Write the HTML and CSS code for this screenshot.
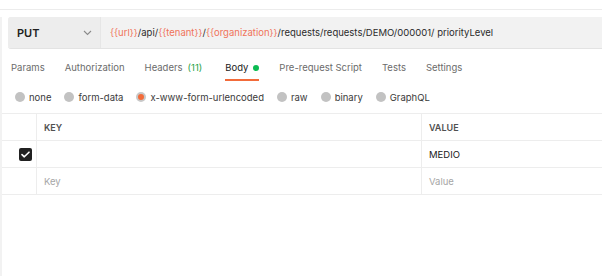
FILE: index.html
```html
<!DOCTYPE html>
<html lang="en">
<head>
  <meta charset="UTF-8">
  <meta name="viewport" content="width=device-width, initial-scale=1.0">
  <title>PUT priorityLevel</title>
  <link rel="stylesheet" href="styles.css">
</head>
<body>
  <div class="topbar"></div>
  <div class="main">
    <div class="request">
      <div class="method">
        <span>PUT</span>
        <svg class="chevron" width="9" height="6" viewBox="0 0 9 6"><path d="M1 1l3.5 3.5L8 1" fill="none" stroke="#8a8a8a" stroke-width="1.1"/></svg>
      </div>
      <div class="url"><span class="var">{{url}}</span>/api/<span class="var">{{tenant}}</span>/<span class="var">{{organization}}</span>/requests/requests/DEMO/000001/ priorityLevel</div>
    </div>

    <div class="tabs">
      <div class="tab">Params</div>
      <div class="tab">Authorization</div>
      <div class="tab">Headers <span class="count">(11)</span></div>
      <div class="tab active">Body <span class="dot"></span></div>
      <div class="tab">Pre-request Script</div>
      <div class="tab">Tests</div>
      <div class="tab">Settings</div>
    </div>

    <div class="modes">
      <label class="mode"><span class="radio"></span>none</label>
      <label class="mode"><span class="radio"></span>form-data</label>
      <label class="mode"><span class="radio on"></span>x-www-form-urlencoded</label>
      <label class="mode"><span class="radio"></span>raw</label>
      <label class="mode"><span class="radio"></span>binary</label>
      <label class="mode"><span class="radio"></span>GraphQL</label>
    </div>

    <div class="table">
      <div class="cell"></div>
      <div class="cell head">KEY</div>
      <div class="cell head">VALUE</div>

      <div class="cell check">
        <span class="box"><svg width="9" height="7" viewBox="0 0 9 7"><path d="M1 3.6l2.3 2.2L8 1.2" fill="none" stroke="#fff" stroke-width="1.6" stroke-linecap="round" stroke-linejoin="round"/></svg></span>
      </div>
      <div class="cell"></div>
      <div class="cell">MEDIO</div>

      <div class="cell"></div>
      <div class="cell placeholder">Key</div>
      <div class="cell placeholder">Value</div>
    </div>
  </div>
</body>
</html>
```

FILE: styles.css
```css
body {
  margin: 0;
  background: #fff;
  font-family: Inter, 'Noto Sans', sans-serif;
  font-size: 9.5px;
  color: #212121;
}
.topbar {
  height: 9px;
  border-bottom: 1px solid #ececec;
}
.main {
  border-left: 2px solid #f2f2f2;
  min-height: 266px;
}
.request {
  display: flex;
  height: 31px;
  margin: 7px 0 0 6px;
  background: #f2f2f2;
  border-bottom: 1px solid #e3e3e3;
  border-radius: 3px 0 0 3px;
}
.method {
  width: 93px;
  flex: none;
  display: flex;
  align-items: center;
  justify-content: space-between;
  padding: 0 8px 0 9px;
  box-sizing: border-box;
  background: #ededed;
  border-right: 1px solid #e6e6e6;
  border-radius: 3px 0 0 3px;
  font-weight: 600;
  font-size: 11px;
}
.url {
  padding-left: 9px;
  line-height: 31px;
  white-space: nowrap;
  color: #2b2b2b;
}
.var {
  color: #f0735a;
}
.tabs {
  display: flex;
  margin: 8px 0 0 9px;
}
.tab {
  padding: 4px 0;
  margin-right: 20px;
  line-height: 14px;
  color: #6b6b6b;
  border-bottom: 2px solid transparent;
  display: flex;
  align-items: center;
}
.tab .count {
  color: #1fa34a;
  margin: 0 3px 0 5px;
}
.tab.active {
  color: #212121;
  border-bottom-color: #f26b3a;
}
.dot {
  width: 6px;
  height: 6px;
  border-radius: 50%;
  background: #0cbb52;
  margin-left: 5px;
}
.modes {
  display: flex;
  margin: 9px 0 0 13px;
  height: 14px;
  align-items: center;
}
.mode {
  display: flex;
  align-items: center;
  margin-right: 13px;
  color: #3a3a3a;
}
.radio {
  width: 10px;
  height: 10px;
  border-radius: 50%;
  background: #c2c2c2;
  margin-right: 4px;
  box-sizing: border-box;
}
.radio.on {
  background: #f26b3a;
  border: 2px solid #c8c8c8;
}
.table {
  display: grid;
  grid-template-columns: 35px 385px 1fr;
  margin-top: 9px;
  border-top: 1px solid #ededed;
}
.cell {
  height: 26px;
  border-bottom: 1px solid #ededed;
  border-right: 1px solid #ededed;
  display: flex;
  align-items: center;
  padding-left: 7px;
}
.cell:nth-child(3n) {
  border-right: none;
}
.head {
  font-size: 9px;
  font-weight: 600;
  color: #505050;
}
.placeholder {
  color: #a6a6a6;
}
.check {
  justify-content: flex-end;
  padding: 0 4px 0 0;
}
.box {
  width: 13px;
  height: 13px;
  border-radius: 2px;
  background: #212121;
  display: flex;
  align-items: center;
  justify-content: center;
}
```
